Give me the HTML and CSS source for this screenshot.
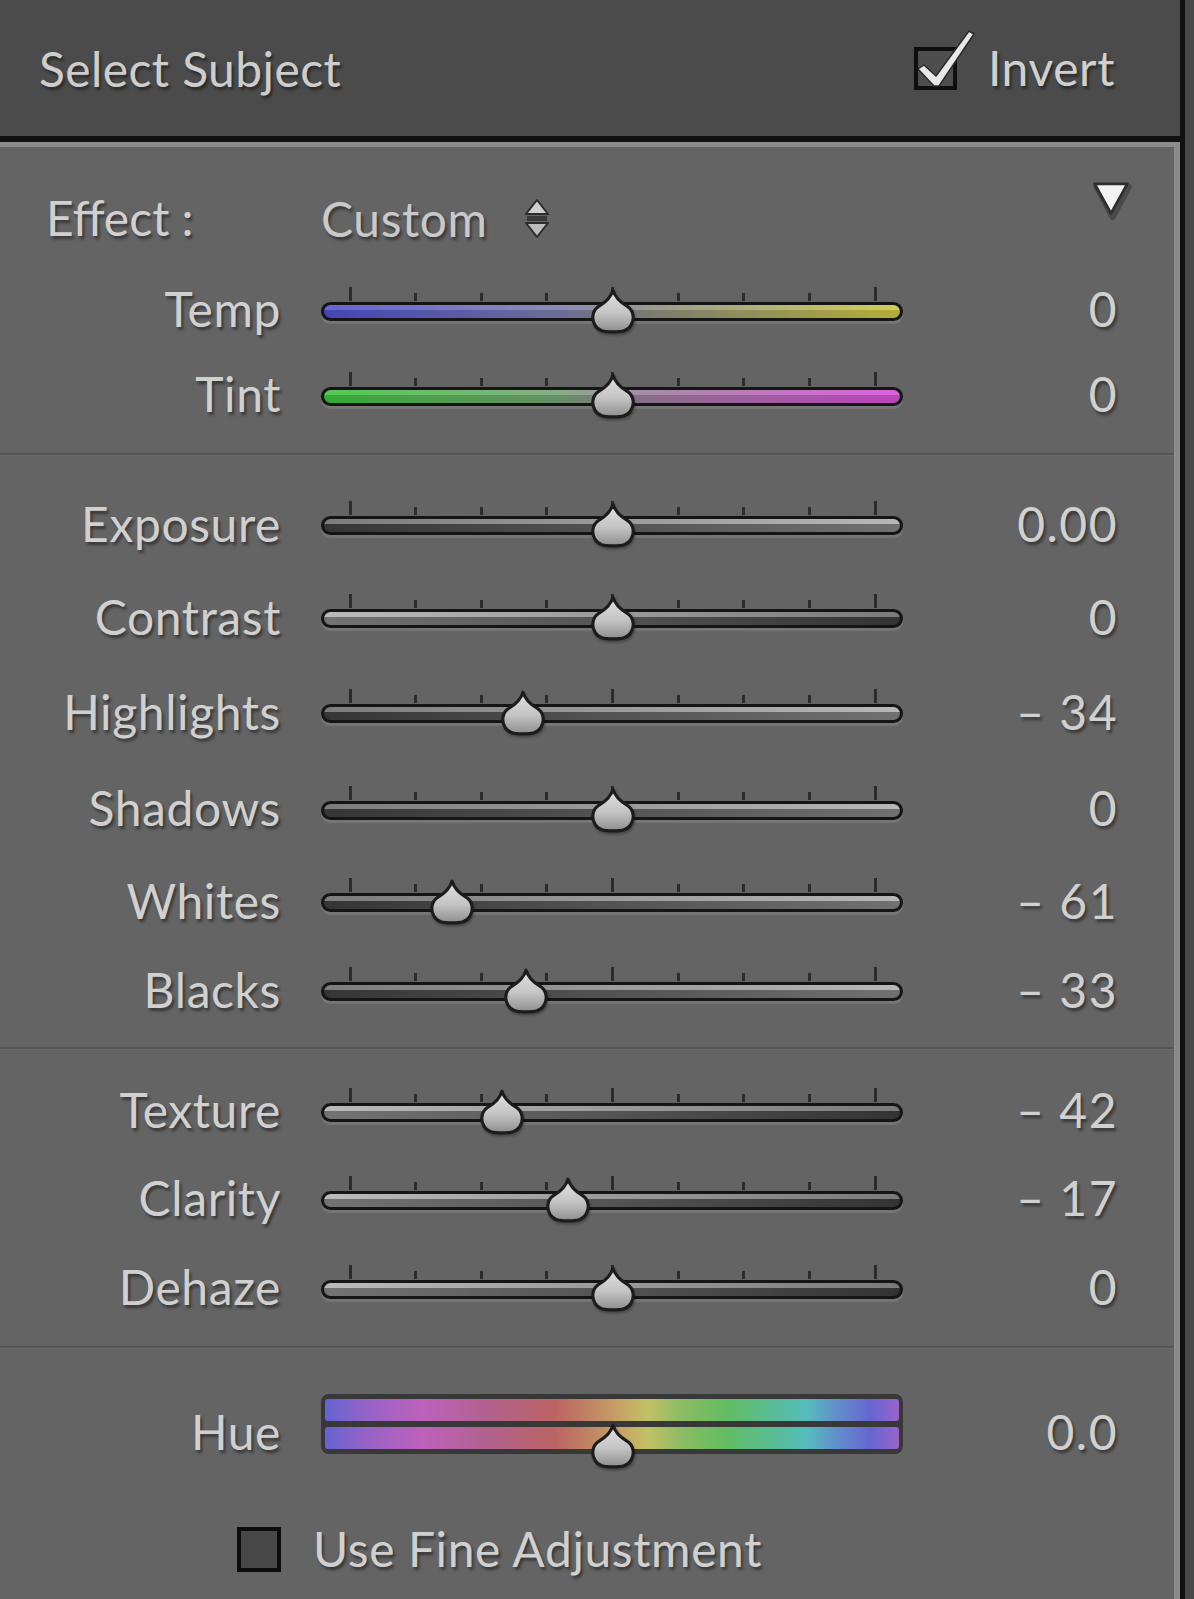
FILE: index.html
```html
<!DOCTYPE html>
<html>
<head>
<meta charset="utf-8">
<link rel="stylesheet" href="styles.css">
</head>
<body>
<div class="app">
  <div class="main">
    <header class="hdr">
      <span class="title">Select Subject</span>
      <div class="invert">
        <span class="cb">
          <svg class="check" viewBox="0 0 43 43" width="43" height="43"><path d="M4 22 L10 18 L22 29 L55 -16 L60 -13 L25 39 L20 39 Z" fill="#e8e8e8" stroke="#2a2a2a" stroke-width="1.5" stroke-linejoin="round"/></svg>
        </span>
        <span class="txt">Invert</span>
      </div>
    </header>
    <section class="panel">
      <div class="sec sec1">
        <div class="row effect-row">
          <span class="effect-label txt">Effect :</span>
          <span class="effect-val"><span class="txt custom">Custom</span>
            <svg class="updown" viewBox="0 0 26 42" width="26" height="42"><path d="M13 2 L24 16 L2 16 Z" fill="#cfcfcf" stroke="#2c2c2c" stroke-width="2" stroke-linejoin="round"/><rect x="3" y="18" width="20" height="5" fill="#3a3a3a"/><path d="M2 25 L24 25 L13 39 Z" fill="#bdbdbd" stroke="#2c2c2c" stroke-width="2" stroke-linejoin="round"/></svg>
          </span>
          <span class="disc-cell">
            <svg class="disc" viewBox="0 0 42 42" width="46" height="46"><path d="M6 9 L36 9 L21 37 Z" fill="#3a3a3a" transform="translate(1.5,2)" stroke="#3a3a3a" stroke-width="5" stroke-linejoin="round" opacity="0.6"/><path d="M6 8 L36 8 L21 35 Z" fill="#f2f2f2" stroke="#2e2e2e" stroke-width="2.5" stroke-linejoin="round"/></svg>
          </span>
        </div>
        <div class="row r-temp">
          <span class="lbl txt">Temp</span>
          <div class="slider" style="--v:0">
            <div class="ticks"><i class="maj"></i><i></i><i></i><i></i><i class="maj"></i><i></i><i></i><i></i><i class="maj"></i></div>
            <div class="track t-temp"></div>
            <svg class="thumb" viewBox="0 0 46 44" width="48" height="46"><use href="#thumbshape"/></svg>
          </div>
          <span class="val txt">0</span>
        </div>
        <div class="row r-tint">
          <span class="lbl txt">Tint</span>
          <div class="slider" style="--v:0">
            <div class="ticks"><i class="maj"></i><i></i><i></i><i></i><i class="maj"></i><i></i><i></i><i></i><i class="maj"></i></div>
            <div class="track t-tint"></div>
            <svg class="thumb" viewBox="0 0 46 44" width="48" height="46"><use href="#thumbshape"/></svg>
          </div>
          <span class="val txt">0</span>
        </div>
      </div>
      <div class="sep"></div>
      <div class="sec sec2">
        <div class="row">
          <span class="lbl txt">Exposure</span>
          <div class="slider" style="--v:0">
            <div class="ticks"><i class="maj"></i><i></i><i></i><i></i><i class="maj"></i><i></i><i></i><i></i><i class="maj"></i></div>
            <div class="track t-up"></div>
            <svg class="thumb" viewBox="0 0 46 44" width="48" height="46"><use href="#thumbshape"/></svg>
          </div>
          <span class="val txt">0.00</span>
        </div>
        <div class="row">
          <span class="lbl txt">Contrast</span>
          <div class="slider" style="--v:0">
            <div class="ticks"><i class="maj"></i><i></i><i></i><i></i><i class="maj"></i><i></i><i></i><i></i><i class="maj"></i></div>
            <div class="track t-down"></div>
            <svg class="thumb" viewBox="0 0 46 44" width="48" height="46"><use href="#thumbshape"/></svg>
          </div>
          <span class="val txt">0</span>
        </div>
        <div class="row">
          <span class="lbl txt">Highlights</span>
          <div class="slider" style="--v:-34">
            <div class="ticks"><i class="maj"></i><i></i><i></i><i></i><i class="maj"></i><i></i><i></i><i></i><i class="maj"></i></div>
            <div class="track t-up"></div>
            <svg class="thumb" viewBox="0 0 46 44" width="48" height="46"><use href="#thumbshape"/></svg>
          </div>
          <span class="val txt">– 34</span>
        </div>
        <div class="row">
          <span class="lbl txt">Shadows</span>
          <div class="slider" style="--v:0">
            <div class="ticks"><i class="maj"></i><i></i><i></i><i></i><i class="maj"></i><i></i><i></i><i></i><i class="maj"></i></div>
            <div class="track t-up"></div>
            <svg class="thumb" viewBox="0 0 46 44" width="48" height="46"><use href="#thumbshape"/></svg>
          </div>
          <span class="val txt">0</span>
        </div>
        <div class="row">
          <span class="lbl txt">Whites</span>
          <div class="slider" style="--v:-61">
            <div class="ticks"><i class="maj"></i><i></i><i></i><i></i><i class="maj"></i><i></i><i></i><i></i><i class="maj"></i></div>
            <div class="track t-up"></div>
            <svg class="thumb" viewBox="0 0 46 44" width="48" height="46"><use href="#thumbshape"/></svg>
          </div>
          <span class="val txt">– 61</span>
        </div>
        <div class="row">
          <span class="lbl txt">Blacks</span>
          <div class="slider" style="--v:-33">
            <div class="ticks"><i class="maj"></i><i></i><i></i><i></i><i class="maj"></i><i></i><i></i><i></i><i class="maj"></i></div>
            <div class="track t-up"></div>
            <svg class="thumb" viewBox="0 0 46 44" width="48" height="46"><use href="#thumbshape"/></svg>
          </div>
          <span class="val txt">– 33</span>
        </div>
      </div>
      <div class="sep"></div>
      <div class="sec sec3">
        <div class="row">
          <span class="lbl txt">Texture</span>
          <div class="slider" style="--v:-42">
            <div class="ticks"><i class="maj"></i><i></i><i></i><i></i><i class="maj"></i><i></i><i></i><i></i><i class="maj"></i></div>
            <div class="track t-down"></div>
            <svg class="thumb" viewBox="0 0 46 44" width="48" height="46"><use href="#thumbshape"/></svg>
          </div>
          <span class="val txt">– 42</span>
        </div>
        <div class="row">
          <span class="lbl txt">Clarity</span>
          <div class="slider" style="--v:-17">
            <div class="ticks"><i class="maj"></i><i></i><i></i><i></i><i class="maj"></i><i></i><i></i><i></i><i class="maj"></i></div>
            <div class="track t-down"></div>
            <svg class="thumb" viewBox="0 0 46 44" width="48" height="46"><use href="#thumbshape"/></svg>
          </div>
          <span class="val txt">– 17</span>
        </div>
        <div class="row">
          <span class="lbl txt">Dehaze</span>
          <div class="slider" style="--v:0">
            <div class="ticks"><i class="maj"></i><i></i><i></i><i></i><i class="maj"></i><i></i><i></i><i></i><i class="maj"></i></div>
            <div class="track t-down"></div>
            <svg class="thumb" viewBox="0 0 46 44" width="48" height="46"><use href="#thumbshape"/></svg>
          </div>
          <span class="val txt">0</span>
        </div>
      </div>
      <div class="sep"></div>
      <div class="sec sec4">
        <div class="row hue-row">
          <span class="lbl txt hue-lbl">Hue</span>
          <div class="hue-slider" style="--v:0">
            <div class="hue-box">
              <div class="hue-bar"></div>
              <div class="hue-bar"></div>
            </div>
            <svg class="thumb hue-thumb" viewBox="0 0 46 44" width="48" height="46"><use href="#thumbshape"/></svg>
          </div>
          <span class="val txt hue-val">0.0</span>
        </div>
        <div class="fine-row">
          <span class="cb cb-off"></span>
          <span class="txt">Use Fine Adjustment</span>
        </div>
      </div>
    </section>
  </div>
  <div class="edge"></div>
  <div class="outer"></div>
</div>
<svg class="defs" width="0" height="0">
  <defs>
    <linearGradient id="thg" x1="0" y1="0" x2="0" y2="1">
      <stop offset="0" stop-color="#e2e2e2"/>
      <stop offset="0.55" stop-color="#c4c4c4"/>
      <stop offset="1" stop-color="#8e8e8e"/>
    </linearGradient>
    <g id="thumbshape">
      <path d="M23 2 C25 9 29 13 36 17 C43 21 44 30 40 36 C37 41 32 42 23 42 C14 42 9 41 6 36 C2 30 3 21 10 17 C17 13 21 9 23 2 Z" fill="url(#thg)" stroke="#1c1c1c" stroke-width="3" stroke-linejoin="round"/>
    </g>
  </defs>
</svg>
</body>
</html>
```

FILE: styles.css
```css
html, body {
  margin: 0;
  padding: 0;
}
body {
  background: #4a4a4a;
  width: 1194px;
  height: 1599px;
  overflow: hidden;
  font-family: "Lato", "Open Sans", sans-serif;
}
.defs {
  position: absolute;
  width: 0;
  height: 0;
}
.app {
  display: flex;
  height: 1599px;
}
.main {
  width: 1180px;
  display: flex;
  flex-direction: column;
}
.edge {
  width: 5px;
  background: #111;
}
.outer {
  flex: 1;
  background: #484848;
}
.txt {
  font-size: 48px;
  line-height: 1;
  color: #d0d0d0;
  letter-spacing: 0.6px;
  text-shadow: 2px 3px 3px rgba(0, 0, 0, 0.45);
  white-space: nowrap;
}
.hdr {
  height: 136px;
  background: #4b4b4b;
  border-bottom: 6px solid #111;
  display: flex;
  align-items: center;
  justify-content: space-between;
  padding: 0 65px 0 39px;
}
.title {
  font-size: 48px;
  line-height: 1;
  color: #cdcdcd;
  letter-spacing: 0.4px;
  text-shadow: 2px 3px 3px rgba(0, 0, 0, 0.45);
  margin-top: 2px;
}
.invert {
  display: flex;
  align-items: center;
  gap: 31px;
}
.cb {
  position: relative;
  width: 43px;
  height: 43px;
  box-sizing: border-box;
  border: 4px solid #0e0e0e;
  background: #4e4e4e;
  display: block;
}
.check {
  position: absolute;
  left: -4px;
  top: -4px;
  overflow: visible;
}
.panel {
  flex: 1;
  background: #646464;
  border-top: 5px solid #8c8c8c;
  border-right: 6px solid #8c8c8c;
}
.sec1 {
  padding: 30px 0 14px;
}
.sec2 {
  padding: 23px 0 11px;
  display: grid;
  grid-template-rows: 93px 93px 97px 96px 89px 89px;
}
.sec3 {
  padding: 18px 0 12px;
  display: grid;
  grid-template-rows: 88px 88px 90px;
}
.sep {
  height: 1px;
  border-top: 2px solid #565656;
  background: #6c6c6c;
}
.row {
  display: grid;
  grid-template-columns: 280px 582px 173px;
  column-gap: 41px;
  align-items: center;
  height: 100%;
}
.effect-row {
  height: 84px;
}
.r-temp {
  height: 84px;
  margin-top: 8px;
}
.r-tint {
  height: 86px;
}
.effect-label {
  padding-left: 46px;
  margin-top: -2px;
  letter-spacing: 0;
}
.effect-val {
  display: flex;
  align-items: center;
  gap: 36px;
}
.custom {
  color: #c9c9c9;
}
.disc-cell {
  align-self: start;
  justify-self: end;
  margin-right: -17px;
  margin-top: -2px;
}
.disc {
  display: block;
}
.lbl {
  text-align: right;
  margin-top: -4px;
  margin-right: -1px;
}
.val {
  text-align: right;
  margin-top: -4px;
  letter-spacing: 1.5px;
  margin-right: -1px;
}
.slider {
  position: relative;
  padding: 15px 0;
}
.ticks {
  position: absolute;
  top: 0;
  left: 0;
  right: 0;
  height: 14px;
  display: flex;
  justify-content: space-between;
  align-items: flex-end;
  padding: 0 26.5px 0 27.5px;
}
.ticks i {
  display: block;
  width: 3px;
  height: 8px;
  background: #2b2b2b;
}
.ticks i.maj {
  height: 14px;
}
.track {
  height: 19px;
  box-sizing: border-box;
  border: 3px solid #151515;
  border-radius: 10px;
  box-shadow: 0 3px 1px rgba(255, 255, 255, 0.12);
}
.t-temp {
  background:
    linear-gradient(to bottom, rgba(255,255,255,0.12) 0 40%, rgba(0,0,0,0.12) 40% 100%),
    linear-gradient(to right, #4f4fcf, #7a7aae 40%, #8a8a84 55%, #cbc63f);
}
.t-tint {
  background:
    linear-gradient(to bottom, rgba(255,255,255,0.12) 0 40%, rgba(0,0,0,0.12) 40% 100%),
    linear-gradient(to right, #3dc23d, #74a474 40%, #9a7e9a 55%, #d64ed6);
}
.t-up {
  background:
    linear-gradient(to bottom, rgba(255,255,255,0.28) 0 35%, rgba(0,0,0,0.28) 35% 100%),
    linear-gradient(to right, #4a4a4a, #9c9c9c);
}
.t-down {
  background:
    linear-gradient(to bottom, rgba(255,255,255,0.28) 0 35%, rgba(0,0,0,0.28) 35% 100%),
    linear-gradient(to right, #a0a0a0, #474747);
}
.thumb {
  position: absolute;
  top: 1px;
  left: calc(5px + (100 + var(--v)) * 2.625px);
  overflow: visible;
  filter: drop-shadow(1px 2px 1px rgba(0,0,0,0.3));
}
.sec4 {
  padding-top: 45px;
}
.hue-row {
  height: 60px;
  align-items: start;
}
.hue-lbl, .hue-val {
  margin-top: 14px;
}
.hue-slider {
  position: relative;
  height: 60px;
}
.hue-box {
  height: 60px;
  box-sizing: border-box;
  background: #383838;
  border-radius: 8px;
  padding: 5px 4px;
  display: flex;
  flex-direction: column;
  gap: 6px;
}
.hue-bar {
  flex: 1;
  border-radius: 3px;
  background: linear-gradient(to right,
    #6464d0 0%, #9a62c6 8%, #bc62bc 17%, #b26290 28%, #bc6464 40%,
    #c49a64 50%, #c4c064 56%, #8cbc64 62%, #62bc62 70%, #5abc96 78%,
    #56bcbc 84%, #6288cc 90%, #6666d0 95%, #9a62cc 100%);
}
.hue-thumb {
  top: 29px;
}
.fine-row {
  margin-top: 65px;
  height: 60px;
  display: flex;
  align-items: center;
  gap: 32px;
  padding-left: 237px;
}
.cb-off {
  width: 44px;
  height: 45px;
  background: #484848;
  border-color: #0c0c0c;
}
```
